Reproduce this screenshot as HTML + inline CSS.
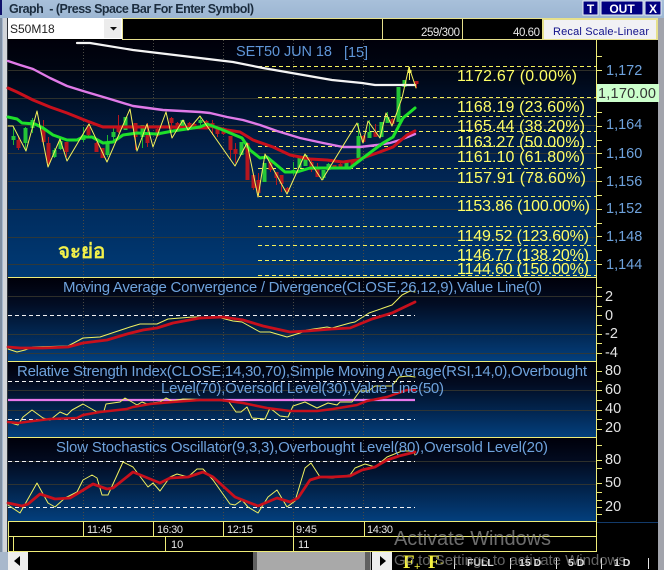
<!DOCTYPE html>
<html><head><meta charset="utf-8"><style>
html,body{margin:0;padding:0;background:#000;width:664px;height:570px;overflow:hidden}
svg{display:block;font-family:"Liberation Sans",sans-serif}
.fib{font-size:16px;fill:#ffff66}
.ax{font-size:14.5px;fill:#6ea2dc}
.ax2{font-size:14.5px;fill:#e4e4e4}
.tt{font-size:15px;fill:#6ea2dc}
.tm{font-size:11px;fill:#e8e8e8}
</style></head><body>
<svg width="664" height="570" viewBox="0 0 664 570" xmlns="http://www.w3.org/2000/svg">
<defs>
<linearGradient id="g1" x1="0" y1="0" x2="0" y2="1"><stop offset="0" stop-color="#00000a"/><stop offset=".12" stop-color="#000512"/><stop offset=".45" stop-color="#011f48"/><stop offset="1" stop-color="#003a75"/></linearGradient>
<linearGradient id="g2" x1="0" y1="0" x2="0" y2="1"><stop offset="0" stop-color="#00000a"/><stop offset=".3" stop-color="#020c22"/><stop offset="1" stop-color="#033f7d"/></linearGradient>
<linearGradient id="tb" x1="0" y1="0" x2="0" y2="1"><stop offset="0" stop-color="#a8c0da"/><stop offset="1" stop-color="#9cb6d2"/></linearGradient>
</defs>
<rect width="664" height="570" fill="#000"/>
<!-- title bar -->
<rect width="664" height="18" fill="url(#tb)"/>
<rect x="0" y="18" width="8" height="552" fill="#a8b8cc"/>
<rect x="3" y="18" width="4" height="534" fill="#d2d5d9"/>
<rect x="0" y="18" width="2" height="534" fill="#7f8fa3"/>
<rect x="7" y="18" width="1" height="534" fill="#30343a"/>
<rect x="0" y="0" width="2" height="15" fill="#10106a"/>
<rect x="658" y="18" width="6" height="552" fill="#a2a4ac"/>
<text x="9" y="13" font-size="12.5" font-weight="bold" fill="#1b2c3e" textLength="245" lengthAdjust="spacing" xml:space="preserve">Graph  - (Press Space Bar For Enter Symbol)</text>
<rect x="583" y="1" width="15" height="14" fill="#000080" stroke="#e8eef5"/>
<text x="590.5" y="13" font-size="12" font-weight="bold" fill="#fff" text-anchor="middle">T</text>
<rect x="601" y="1" width="42" height="14" fill="#000080" stroke="#e8eef5"/>
<text x="622" y="13" font-size="12" font-weight="bold" fill="#fff" text-anchor="middle">OUT</text>
<rect x="645" y="1" width="16" height="14" fill="#000080" stroke="#e8eef5"/>
<text x="653" y="13" font-size="12" font-weight="bold" fill="#fff" text-anchor="middle">X</text>
<!-- toolbar -->
<rect x="8" y="18" width="650" height="23" fill="#000"/>
<rect x="8" y="18" width="114" height="21" fill="#fff"/>
<rect x="104" y="19" width="17" height="19" fill="#ececec"/>
<path d="M110 27h7l-3.500 3.500z" fill="#111"/>
<text x="10" y="33" font-size="12" fill="#222">S50M18</text>
<rect x="122.500" y="18.500" width="420" height="21" fill="#000" stroke="#e6e08c"/>
<path d="M382.500 18v22M462.500 18v22" stroke="#e6e08c" fill="none"/>
<text x="421" y="36" font-size="11.500" fill="#e6e6e6" textLength="39">259/300</text>
<text x="513" y="36" font-size="11.500" fill="#e6e6e6" textLength="27">40.60</text>
<rect x="543" y="18" width="115" height="22" fill="#e6e08c"/>
<rect x="544" y="20" width="112" height="19" fill="#f1f1f4"/>
<text x="553" y="35" font-size="11" fill="#10108a" textLength="96" lengthAdjust="spacing">Recal Scale-Linear</text>
<!-- panels -->
<rect x="8" y="40" width="588" height="237" fill="url(#g1)"/>
<rect x="8" y="278" width="588" height="83" fill="url(#g2)"/>
<rect x="8" y="362" width="588" height="75" fill="url(#g2)"/>
<rect x="8" y="438" width="588" height="83" fill="url(#g2)"/>
<!-- grid -->
<g shape-rendering="crispEdges" fill="none">
<path d="M8 70.500H596M8 98.500H596M8 125.500H596M8 153.500H596M8 181.500H596M8 209.500H596M8 237.500H596M8 264.500H596M8 296.500H596M8 334.500H596M8 353.500H596M8 390.500H596M8 410.500H596M8 484.500H596M8 461.500H596" stroke="#3a3a2e" stroke-opacity=".8"/>
<path d="M83.500 40V277M153.500 40V277M223.500 40V277M293.500 40V277M363.500 40V277M83.500 278V521M153.500 278V521M223.500 278V521M293.500 278V521M363.500 278V521" stroke="#4a4a44" stroke-dasharray="1 2"/>
<path d="M258 66.500H596M258 97.500H596M258 116.500H596M258 131.500H596M258 146.500H596M258 168.500H596M258 196.500H596M258 226.500H596M258 245.500H596M258 260.500H596M258 275.500H596" stroke="#f4f05a" stroke-dasharray="4 3"/>
<path d="M8 315.500H415M8 381.500H415M8 419.500H415M8 461.500H415M8 507.500H415" stroke="#f2f2f2" stroke-dasharray="4 3"/>
<path d="M8 277.500H596.500M8 361.500H596.500M8 437.500H596.500M8 521.500H596.500M8 536.500H596.500M8 551.500H596.500M8.500 521V552M596.500 40V552" stroke="#eeec78"/>
<path d="M83.500 521V536M153.500 521V536M223.500 521V536M293.500 521V536M364.500 521V536M13.500 536V551M165.500 536V551M293.500 536V551" stroke="#eeec78"/>
<path d="M597 56.500h5M597 70.500h5M597 84.500h5M597 98.500h5M597 112.500h5M597 126.500h5M597 140.500h5M597 153.500h5M597 167.500h5M597 181.500h5M597 195.500h5M597 209.500h5M597 223.500h5M597 236.500h5M597 250.500h5M597 264.500h5M597 287.500h5M597 296.500h5M597 306.500h5M597 315.500h5M597 325.500h5M597 334.500h5M597 343.500h5M597 353.500h5M597 371.500h5M597 381.500h5M597 390.500h5M597 400.500h5M597 410.500h5M597 419.500h5M597 429.500h5M597 445.500h5M597 460.500h5M597 468.500h5M597 483.500h5M597 492.500h5M597 500.500h5M597 507.500h5M597 514.500h5" stroke="#eeec78"/>
<path d="M597 522.500H658" stroke="#123a6a"/>
</g>
<!-- candle wicks + bodies -->
<g fill="none">
<path d="M13.500 127V145M25.500 127V150M32.500 118V133M54.500 148V158M60.500 140V150M83.500 127V142M107.500 135V157M113.500 127V140M125.500 117V130M142.500 125V148M182.500 120V130M200.500 117V125M241.500 142V155M264.500 163V182M293.500 162V175M299.500 157V168M305.500 155V166M323.500 170V180M328.500 163V170M346.500 162V167M358.500 123V158M369.500 120V138M381.500 122V137M387.500 112V123M398.500 87V122M404.500 80V87" stroke="#1fb52f"/>
<path d="M13.500 136V140M25.500 128V143M32.500 120V128M54.500 150V157M60.500 141V149M83.500 135V140M107.500 142V155M113.500 132V137M125.500 117V130M142.500 125V137M182.500 120V130M200.500 120V123M241.500 142V155M264.500 163V182M293.500 170V173M299.500 157V168M305.500 155V166M323.500 170V178M328.500 164V170M346.500 162V167M358.500 136V158M369.500 132V138M381.500 122V137M387.500 117V123M398.500 87V122M404.500 80V87" stroke="#24c538" stroke-width="4"/>
<path d="M18.500 137V150M43.500 120V143M48.500 137V165M66.500 142V157M88.500 125V137M96.500 142V152M102.500 148V158M118.500 115V133M135.500 123V150M147.500 123V147M157.500 128V137M171.500 117V133M177.500 122V132M189.500 122V128M194.500 123V128M206.500 120V128M212.500 120V135M217.500 127V137M223.500 128V135M230.500 136V160M235.500 143V163M247.500 143V180M253.500 175V190M258.500 173V197M270.500 160V172M276.500 172V185M281.500 175V192M287.500 187V193M311.500 158V172M317.500 163V177M334.500 165V168M340.500 163V168M352.500 160V167M363.500 135V143M375.500 124V137M392.500 118V125M416.500 81V88" stroke="#b5161e"/>
<path d="M18.500 140V148M43.500 128V142M48.500 143V163M66.500 142V152M88.500 127V135M96.500 143V152M102.500 148V158M118.500 127V132M135.500 123V137M147.500 133V143M157.500 129V136M171.500 118V123M177.500 123V131M189.500 123V127M194.500 124V127M206.500 121V127M212.500 123V128M217.500 128V134M223.500 129V134M230.500 136V150M235.500 149V154M247.500 143V180M253.500 175V188M258.500 180V193M270.500 162V170M276.500 172V178M281.500 175V184M287.500 188V192M311.500 162V170M317.500 168V177M334.500 165V168M340.500 164V167M352.500 161V166M363.500 136V142M375.500 132V137M392.500 119V124M416.500 81V84" stroke="#b5161e" stroke-width="4"/>
<path d="M409.500 67V80" stroke="#f4f05a"/><path d="M409.500 70V73" stroke="#f4f05a" stroke-width="4"/>
</g>
<!-- moving averages main -->
<g fill="none" stroke-linejoin="round" stroke-linecap="round">
<polyline stroke="#f4f4f4" stroke-width="2.200" points="77,43 90,43 133,50 233,62 263,68 332,80 362,83 375,85 415,85"/>
<polyline stroke="#e07ae8" stroke-width="2.400" points="8,61 20,65 33,69 50,78 67,86 83,91 110,99 133,106 163,110 200,112 210,113 227,117 243,120 260,125 277,131 300,138 323,143 343,147 360,147 377,145 390,143 400,140 415,134"/>
<polyline stroke="#c8101c" stroke-width="3" points="8,88 17,92 33,100 50,107 67,113 87,121 103,127 133,127 167,127 207,128 210,126 227,130 240,132 253,140 273,147 290,155 310,159 327,160 343,162 357,160 377,153 393,147 407,135 415,131"/>
<polyline stroke="#1ee02a" stroke-width="3" points="8,117 17,119 22,123 35,124 43,128 53,135 67,140 77,140 83,137 92,137 103,143 113,142 123,135 137,133 157,134 173,131 200,127 207,124 223,130 242,138 250,150 260,158 267,157 285,172 297,172 310,168 350,168 363,158 383,143 393,137 403,118 415,108"/>
<polyline stroke="#f4f05a" stroke-width="1" points="8,126 13,126 26,151 37,111 48,167 60,139 67,161 89,124 107,162 130,109 137,151 147,124 153,147 166,112 172,138 183,120 188,130 200,116 235,166 247,143 258,197 265,154 287,194 305,154 322,180 357,123 363,143 368,121 380,138 386,113 392,126 402,98 409,67 416,88"/>
<!-- MACD -->
<polyline stroke="#f0f060" stroke-width="1" points="8,349 17,352 25,350 33,347 68,346 83,338 100,337 115,332 130,327 140,324 157,324 168,319 193,317 217,317 233,321 242,322 260,332 270,332 287,337 300,333 307,330 327,327 332,328 350,323 355,322 369,313 392,305 402,295 410,291 415,292"/>
<polyline stroke="#c8101c" stroke-width="2.800" points="8,347 20,348 43,348 68,347 83,343 107,340 127,334 143,330 157,328 173,323 200,318 223,317 243,320 263,326 290,332 307,331 332,329 350,328 372,319 392,313 415,302"/>
<!-- RSI -->
<line x1="8" y1="400" x2="415" y2="400" stroke="#e878ec" stroke-width="2.200" stroke-linecap="butt"/>
<polyline stroke="#f0f060" stroke-width="1" points="8,422 18,425 23,417 32,410 43,418 50,420 60,412 67,415 72,410 83,404 97,412 104,411 106,404 120,402 125,398 132,402 137,405 142,402 147,404 152,403 160,402 166,398 172,401 183,399 223,400 229,402 236,412 241,412 247,407 252,418 265,419 270,408 280,416 288,417 293,406 305,402 317,408 328,403 337,405 340,402 352,402 360,391 368,391 375,386 392,386 399,377 408,376 415,377"/>
<polyline stroke="#c8101c" stroke-width="2.500" points="8,422 18,423 33,421 50,419 77,418 83,415 100,412 127,409 133,407 150,404 173,402 200,400 220,400 243,403 267,408 290,411 317,411 333,409 357,405 367,401 387,397 407,390 415,390"/>
<!-- Stochastic -->
<polyline stroke="#f0f060" stroke-width="1" points="8,505 20,513 37,483 48,503 55,507 65,498 77,492 83,480 92,475 97,478 102,495 108,495 123,462 133,467 148,487 153,483 160,491 170,477 177,474 188,477 197,469 203,469 213,480 230,504 235,505 242,500 248,507 258,513 268,497 277,490 287,507 295,501 305,468 311,463 320,477 332,478 350,475 355,468 365,464 375,467 387,457 402,451 414,451 415,455"/>
<polyline stroke="#c8101c" stroke-width="2.800" points="8,503 22,506 28,504 40,494 55,499 70,498 80,492 93,484 107,489 113,488 133,472 160,483 170,478 188,477 203,472 213,477 235,497 258,506 277,498 290,502 298,498 310,480 320,477 332,477 350,476 362,470 375,467 387,460 399,456 415,452"/>
</g>
<!-- titles -->
<text x="236" y="56" font-size="14.500" fill="#5f96d8" textLength="96">SET50 JUN 18</text>
<text x="344" y="57" font-size="14.500" fill="#5f96d8" textLength="24">[15]</text>
<text x="58" y="258" font-size="20.500" font-weight="bold" fill="#f2f04a" font-family="'Liberation Sans','DejaVu Sans','Noto Sans CJK SC',sans-serif">จะย่อ</text>
<g class="fib">
<text x="457" y="81" class="fib" textLength="120">1172.67 (0.00%)</text>
<text x="457" y="112" class="fib" textLength="128">1168.19 (23.60%)</text>
<text x="457" y="131" class="fib" textLength="128">1165.44 (38.20%)</text>
<text x="457" y="147" class="fib" textLength="128">1163.27 (50.00%)</text>
<text x="457" y="162" class="fib" textLength="128">1161.10 (61.80%)</text>
<text x="457" y="183" class="fib" textLength="129">1157.91 (78.60%)</text>
<text x="457" y="211" class="fib" textLength="133">1153.86 (100.00%)</text>
<text x="457" y="241" class="fib" textLength="132">1149.52 (123.60%)</text>
<text x="457" y="260" class="fib" textLength="132">1146.77 (138.20%)</text>
<text x="457" y="274" class="fib" textLength="132">1144.60 (150.00%)</text>
</g>
<text class="tt" x="63" y="292" textLength="479">Moving Average Convergence / Divergence(CLOSE,26,12,9),Value Line(0)</text>
<text class="tt" x="17" y="376" textLength="570">Relative Strength Index(CLOSE,14,30,70),Simple Moving Average(RSI,14,0),Overbought</text>
<text class="tt" x="161" y="393" textLength="283">Level(70),Oversold Level(30),Value Line(50)</text>
<text class="tt" x="56" y="452" textLength="492">Slow Stochastics Oscillator(9,3,3),Overbought Level(80),Oversold Level(20)</text>
<!-- axis labels -->
<text class="ax" x="606" y="75">1,172</text>
<text class="ax" x="606" y="129">1,164</text>
<text class="ax" x="606" y="158">1,160</text>
<text class="ax" x="606" y="186">1,156</text>
<text class="ax" x="606" y="213">1,152</text>
<text class="ax" x="606" y="241">1,148</text>
<text class="ax" x="606" y="269">1,144</text>
<rect x="597" y="84" width="62" height="18" fill="#ccffcc"/>
<text x="598" y="98" font-size="14.500" fill="#333" textLength="58">1,170.00</text>
<text class="ax2" x="605" y="301">2</text>
<text class="ax2" x="605" y="320">0</text>
<text class="ax2" x="605" y="338">-2</text>
<text class="ax2" x="605" y="357">-4</text>
<text class="ax2" x="605" y="375">80</text>
<text class="ax2" x="605" y="394">60</text>
<text class="ax2" x="605" y="413">40</text>
<text class="ax2" x="605" y="432">20</text>
<text class="ax2" x="605" y="464">80</text>
<text class="ax2" x="605" y="487">50</text>
<text class="ax2" x="605" y="511">20</text>
<!-- time labels -->
<text class="tm" x="87" y="533" textLength="25">11:45</text>
<text class="tm" x="157" y="533" textLength="26">16:30</text>
<text class="tm" x="227" y="533" textLength="26">12:15</text>
<text class="tm" x="296" y="533" textLength="21">9:45</text>
<text class="tm" x="367" y="533" textLength="26">14:30</text>
<text class="tm" x="171" y="548">10</text>
<text class="tm" x="298" y="548">11</text>
<!-- scrollbar -->
<rect x="8" y="552" width="20" height="18" fill="#eeeeee"/>
<path d="M14 561l6-5v10z" fill="#000"/>
<rect x="28" y="552" width="225" height="18" fill="#000"/>
<rect x="253" y="552" width="118" height="18" fill="#a9a9a9"/>
<rect x="253" y="552" width="4" height="18" fill="#606060"/>
<rect x="365" y="552" width="5" height="18" fill="#606060"/>
<rect x="372" y="552" width="20" height="18" fill="#eeeeee"/>
<path d="M380 556l6 5-6 5z" fill="#000"/>
<!-- right toolbar -->
<text x="403" y="568" font-size="19" font-weight="bold" fill="#f4f040" font-family="'Liberation Serif',serif">F</text><text x="414" y="570" font-size="11" fill="#f4f040">+</text>
<text x="428" y="568" font-size="19" font-weight="bold" fill="#f4f040" font-family="'Liberation Serif',serif">F</text><text x="440" y="566" font-size="11" fill="#f4f040">-</text>
<g font-size="10.500" font-weight="bold" fill="#e6e6e6">
<text x="467" y="566">FULL</text><text x="519" y="566">15 D</text><text x="568" y="566">5 D</text><text x="614" y="566">1 D</text>
</g>
<path d="M454.500 558v11M510.500 558v11M556.500 558v11M601.500 558v11M648.500 558v11" stroke="#e6e6e6"/>
<!-- watermark -->
<text x="394" y="545" font-size="20" fill="#9a9a9a" fill-opacity=".7" textLength="157">Activate Windows</text>
<text x="394" y="565" font-size="15" fill="#9a9a9a" fill-opacity=".65" textLength="236">Go to Settings to activate Windows.</text>
</svg>
</body></html>
